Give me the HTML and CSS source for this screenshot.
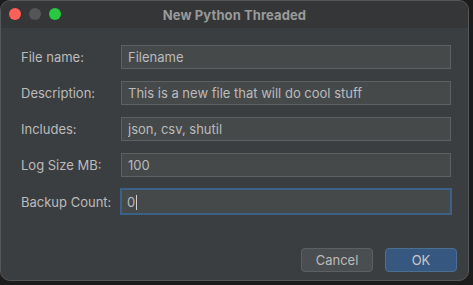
FILE: index.html
```html
<!DOCTYPE html>
<html lang="en">
<head>
  <meta charset="UTF-8" />
  <title>New Python Threaded</title>
  <link rel="stylesheet" href="styles.css">
</head>
<body>
  <div class="window">
    <div class="titlebar">
      <div class="lights">
        <span class="light red"></span>
        <span class="light gray"></span>
        <span class="light green"></span>
      </div>
      <div class="title">New Python Threaded</div>
    </div>

    <form class="form">
      <label for="name">File name:</label>
      <input type="text" id="name" value="Filename" />

      <label for="desc">Description:</label>
      <input type="text" id="desc" value="This is a new file that will do cool stuff" />

      <label for="inc">Includes:</label>
      <input type="text" id="inc" value="json, csv, shutil" />

      <label for="log">Log Size MB:</label>
      <input type="text" id="log" value="100" />

      <label for="backup">Backup Count:</label>
      <div class="focus-wrap"><input type="text" id="backup" class="focused" value="0" /><span class="caret"></span></div>
    </form>

    <div class="buttons">
      <button type="button" class="btn">Cancel</button>
      <button type="button" class="btn primary">OK</button>
    </div>
  </div>
</body>
</html>
```

FILE: styles.css
```css
body {
  margin: 0;
  background: #1c1c1c;
  font-family: Inter, "Noto Sans", sans-serif;
  font-size: 13px;
  color: #bbbbbb;
}
.window {
  width: 467px;
  height: 279px;
  background: #3b3e40;
  border: 1px solid #555759;
  border-radius: 10px;
  overflow: hidden;
  display: flex;
  flex-direction: column;
}
.titlebar {
  height: 27px;
  background: #353638;
  position: relative;
  display: flex;
  align-items: center;
  justify-content: center;
}
.lights {
  position: absolute;
  left: 8px;
  top: 7px;
  display: flex;
  gap: 8px;
}
.light {
  width: 12px;
  height: 12px;
  border-radius: 50%;
}
.red { background: #fe5f57; }
.gray { background: #545557; }
.green { background: #28c840; }
.title {
  font-weight: 700;
  color: #9a9a9a;
  font-size: 13px;
  letter-spacing: 0.1px;
}
.form {
  display: grid;
  grid-template-columns: 100px 330px;
  row-gap: 12px;
  align-items: center;
  padding: 17px 0 0 20px;
}
label {
  color: #bbbbbb;
}
input[type="text"] {
  box-sizing: border-box;
  width: 100%;
  height: 24px;
  margin: 0;
  padding: 0 6px;
  background: #45494a;
  border: 1px solid #5e6162;
  color: #bbbbbb;
  font-family: inherit;
  font-size: 13px;
  outline: none;
}
.focus-wrap {
  position: relative;
}
input.focused {
  border: 2px solid #3c6087;
  margin: -1px 0 0 -1px;
  width: calc(100% + 2px);
  height: 27px;
  padding-left: 5px;
  caret-color: transparent;
}
.caret {
  position: absolute;
  left: 15px;
  top: 6px;
  width: 1px;
  height: 15px;
  background: #d0d0d0;
}
.buttons {
  margin-top: auto;
  display: flex;
  justify-content: flex-end;
  gap: 12px;
  padding: 0 11px 8px 0;
}
.btn {
  box-sizing: border-box;
  width: 72px;
  height: 24px;
  border-radius: 4px;
  border: 1px solid #5d6062;
  background: #4a4e50;
  color: #bbbbbb;
  font-family: inherit;
  font-size: 13px;
}
.btn.primary {
  background: #365880;
  border-color: #4b6f91;
  color: #c8c8c8;
}
```
